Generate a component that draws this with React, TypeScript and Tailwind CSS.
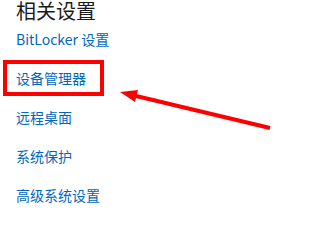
const items = ["BitLocker 设置", "设备管理器", "远程桌面", "系统保护", "高级系统设置"]

export default function App() {
  return (
    <main
      className="relative h-[222px] w-[312px] overflow-hidden bg-white"
      style={{ fontFamily: '"Noto Sans CJK SC", "Noto Sans", sans-serif' }}
    >
      <h2 className="h-[19px] pl-[16px] pt-[3px] text-[20px] leading-[16px] text-[#1b1b1b]">相关设置</h2>
      <ul>
        {items.map((item, i) => (
          <li key={item} className="relative flex h-[39px] items-center pl-[16px]">
            <span className="text-[14px] leading-[18px] text-[#0067c0]">{item}</span>
            {i === 1 && (
              <span className="absolute left-[3px] top-[2px] h-[36px] w-[101px] border-[4px] border-[#ff0000]" />
            )}
          </li>
        ))}
      </ul>

      {/* annotation arrow */}
      <svg className="absolute left-0 top-0" width="312" height="222" viewBox="0 0 312 222">
        <line x1="270" y1="128" x2="134" y2="95.5" stroke="#ff0000" strokeWidth="4" />
        <polygon points="120,92 138,90 135,102" fill="#ff0000" />
      </svg>
    </main>
  )
}
